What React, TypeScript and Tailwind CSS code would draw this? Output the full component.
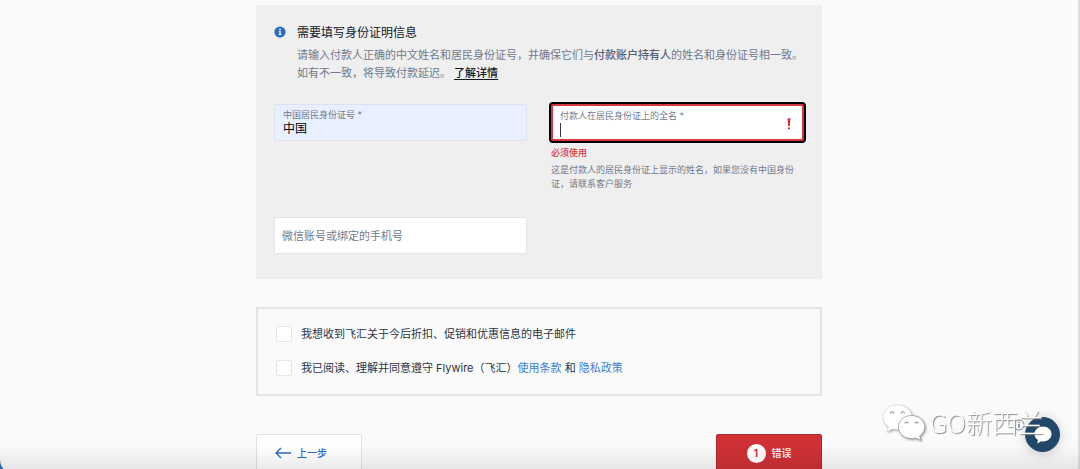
import { useState } from 'react';
import type { ReactNode } from 'react';

interface FieldProps {
  id: string;
  label: string;
  value: string;
  onChange: (value: string) => void;
  className: string;
  caret?: boolean;
  error?: boolean;
}

function InfoIcon() {
  return (
    <svg viewBox="0 0 12 12" className="h-3 w-3 shrink-0" aria-hidden="true">
      <circle cx="6" cy="6" r="5.6" fill="#2f6bbd" />
      <circle cx="6" cy="3.4" r="0.9" fill="#fff" />
      <path d="M4.8 5h1.9v3.1h.7v.9H4.7v-.9h.7V5.9h-.6z" fill="#fff" />
    </svg>
  );
}

// 带浮动标签的输入框
function Field({ id, label, value, onChange, className, caret, error }: FieldProps) {
  return (
    <div className={`flex h-[37px] items-center rounded-xs ${className}`}>
      <div className="flex min-w-0 flex-1 flex-col">
        <label htmlFor={id} className="text-[9px] leading-3 text-[#6f7a8c]">
          {label}
        </label>
        <div className="flex h-4 items-center">
          {caret && <span className="h-3.5 w-px bg-[#303846]" />}
          <input
            id={id}
            value={value}
            onChange={(e) => onChange(e.target.value)}
            aria-invalid={error}
            className="w-full min-w-0 bg-transparent text-xs leading-4 text-black outline-none"
          />
        </div>
      </div>
      {error && (
        <svg viewBox="0 0 4 12" className="mr-1 h-3 w-1" aria-hidden="true">
          <path d="M.6.300h2.800L2.900 8H1.100z" fill="#cf3339" />
          <circle cx="2" cy="10.400" r="1.100" fill="#cf3339" />
        </svg>
      )}
    </div>
  );
}

function Consent({ id, children }: { id: string; children: ReactNode }) {
  return (
    <div className="flex items-center gap-[9px]">
      <input
        id={id}
        type="checkbox"
        className="h-4 w-4 shrink-0 appearance-none rounded-xs border border-[#e2e5e9] bg-white checked:bg-[#2f6bbd]"
      />
      <label htmlFor={id} className="text-[11px] leading-4 text-[#2c3542]">
        {children}
      </label>
    </div>
  );
}

function Watermark() {
  return (
    <div className="pointer-events-none fixed right-9 bottom-7 flex items-center gap-1">
      <svg
        viewBox="0 0 44 38"
        className="h-[38px] w-11 drop-shadow-[1px_1px_1px_#999999]"
        aria-hidden="true"
      >
        <path
          d="M15.500 2C7.500 2 1 7.300 1 14.300c0 4 2.200 7.300 5.600 9.500L5 28.800l5.600-2.900c1.600.5 3.200.7 5 .7C23.500 26.600 30 21.200 30 14.300S23.500 2 15.500 2z"
          fill="#fff"
          stroke="#c8c8c8"
          strokeWidth=".4"
        />
        <path
          d="M29.500 12.500c-7.200 0-13 5-13 11.500s5.800 11.600 13 11.600c1.500 0 3-.2 4.300-.6l5.200 2.400-1.400-4.300c3.100-2 5.100-5.300 5.100-9.100 0-6.500-6-11.500-13.200-11.500z"
          fill="#fff"
          stroke="#9b9b9b"
          strokeWidth=".8"
        />
        <g fill="none" stroke="#8c8c8c" strokeWidth="1.100">
          <path d="M8.500 10.500a1.700 1.700 0 0 1 3.400 0M19 10.500a1.700 1.700 0 0 1 3.400 0" />
          <path d="M23 20.500a1.500 1.500 0 0 1 3 0M33 20.500a1.500 1.500 0 0 1 3 0" />
        </g>
      </svg>
      <span className="font-['Noto_Sans_CJK_SC',sans-serif] text-[26px] leading-9 font-light whitespace-nowrap text-white [text-shadow:1px_1px_1px_#888888]">
        GO新西兰
      </span>
    </div>
  );
}

export default function App() {
  const [idNumber, setIdNumber] = useState('中国');
  const [fullName, setFullName] = useState('');
  const [phone, setPhone] = useState('');

  return (
    <div className="h-screen overflow-hidden border-r-2 border-[#dedede] bg-[#fafafa] font-[Inter,'Noto_Sans_CJK_SC',sans-serif]">
      <main className="mx-auto max-w-[566px] pt-[5px]">
        {/* 身份信息 */}
        <section className="bg-[#efefef] px-[18px] pt-[18px] pb-[25px]">
          <div className="flex gap-[11px]">
            <div className="flex h-[18px] items-center">
              <InfoIcon />
            </div>
            <div>
              <h2 className="text-xs leading-5 text-[#14171c]">需要填写身份证明信息</h2>
              <p className="mt-[3px] text-[11px] leading-[18px] text-[#6f7a8c]">
                请输入付款人正确的中文姓名和居民身份证号，并确保它们与
                <strong className="font-medium text-[#566073]">付款账户持有人</strong>
                的姓名和身份证号相一致。
                <br />
                如有不一致，将导致付款延迟。{' '}
                <a href="#more" className="font-medium text-[#14171c] underline underline-offset-2">
                  了解详情
                </a>
              </p>
            </div>
          </div>

          <div className="mt-[22px] grid grid-cols-2 gap-x-6 gap-y-[26px]">
            <Field
              id="id-number"
              label="中国居民身份证号 *"
              value={idNumber}
              onChange={setIdNumber}
              className="border border-[#dce3ec] bg-[#e8f0fe] px-2"
            />
            <div>
              <Field
                id="full-name"
                label="付款人在居民身份证上的全名 *"
                value={fullName}
                onChange={setFullName}
                className="border-2 border-[#d5383e] bg-white px-[7px] pt-0.5 ring-2 ring-black"
                caret
                error
              />
              <p className="mt-1.5 text-[9px] leading-3 font-medium text-[#d5383e]">必须使用</p>
              <p className="mt-1 pr-2 text-[9px] leading-[14px] text-[#6f7a8c]">
                这是付款人的居民身份证上显示的姓名，如果您没有中国身份证，请联系客户服务
              </p>
            </div>
            <input
              aria-label="微信账号或绑定的手机号"
              placeholder="微信账号或绑定的手机号"
              value={phone}
              onChange={(e) => setPhone(e.target.value)}
              className="h-[37px] min-w-0 rounded-xs border border-[#e2e5ea] bg-white px-[7px] text-[11px] text-black outline-none placeholder:text-[#6f7a8c]"
            />
          </div>
        </section>

        {/* 条款 */}
        <section className="mt-7 flex flex-col gap-[18px] border-2 border-[#e4e4e4] px-[18px] pt-[17px] pb-[18px]">
          <Consent id="marketing">我想收到飞汇关于今后折扣、促销和优惠信息的电子邮件</Consent>
          <Consent id="terms">
            我已阅读、理解并同意遵守 Flywire（飞汇）
            <a href="#terms-of-use" className="text-[#3f7fd0]">
              使用条款
            </a>{' '}
            和{' '}
            <a href="#privacy" className="text-[#3f7fd0]">
              隐私政策
            </a>
          </Consent>
        </section>

        <div className="mt-[38px] flex justify-between">
          <button
            type="button"
            className="flex h-[38px] w-[106px] items-center gap-1.5 rounded-xs border border-[#e2e2e2] bg-white px-[18px] text-[10px] font-medium text-[#2f6bbd]"
          >
            <svg viewBox="0 0 16 12" className="h-3 w-4" fill="none" aria-hidden="true">
              <path d="M6 1 1 6l5 5M1 6h15" stroke="currentColor" strokeWidth="1.3" />
            </svg>
            上一步
          </button>
          <button
            type="button"
            className="flex h-[38px] w-[106px] items-center justify-center gap-1.5 rounded-xs border border-[#b3282d] bg-[#cf3135] text-[10px] font-medium text-white"
          >
            <span className="flex h-[19px] w-[19px] items-center justify-center rounded-full bg-white font-bold text-[#cf3135]">
              1
            </span>
            错误
          </button>
        </div>
      </main>

      <div className="pointer-events-none fixed inset-x-0 bottom-0 h-6 bg-linear-to-b from-transparent to-black/8" />

      {/* 左下角的窗口圆角 */}
      <svg viewBox="0 0 4 9" className="fixed bottom-0 left-0 h-[9px] w-1" aria-hidden="true">
        <path d="M0 0Q.5 6 3.500 9H0z" fill="#2d66a3" />
      </svg>

      <button
        type="button"
        aria-label="在线客服"
        className="fixed right-5 bottom-[17px] flex h-[35px] w-[35px] items-center justify-center rounded-full bg-[#214769] shadow-[0_1px_12px_rgba(0,0,0,0.2)]"
      >
        <svg viewBox="0 0 18 18" className="h-[18px] w-[18px]" aria-hidden="true">
          <path
            d="M9 .5C4.200.5.500 3.800.500 8c0 2.500 1.300 4.700 3.400 6l-.7 3.500 4-2.200c.6.100 1.200.2 1.800.2 4.800 0 8.500-3.300 8.500-7.500S13.800.500 9 .500z"
            fill="#fff"
          />
        </svg>
      </button>
      <svg
        viewBox="0 0 12 12"
        className="pointer-events-none fixed right-[55px] bottom-[38px] h-3 w-3"
        fill="none"
        stroke="#75869b"
        aria-hidden="true"
      >
        <circle cx="6" cy="6" r="5" fill="#fafafa" />
        <path d="M6 5v4M6 2.700v1.200" strokeWidth="1.500" />
      </svg>
      <Watermark />
    </div>
  );
}
